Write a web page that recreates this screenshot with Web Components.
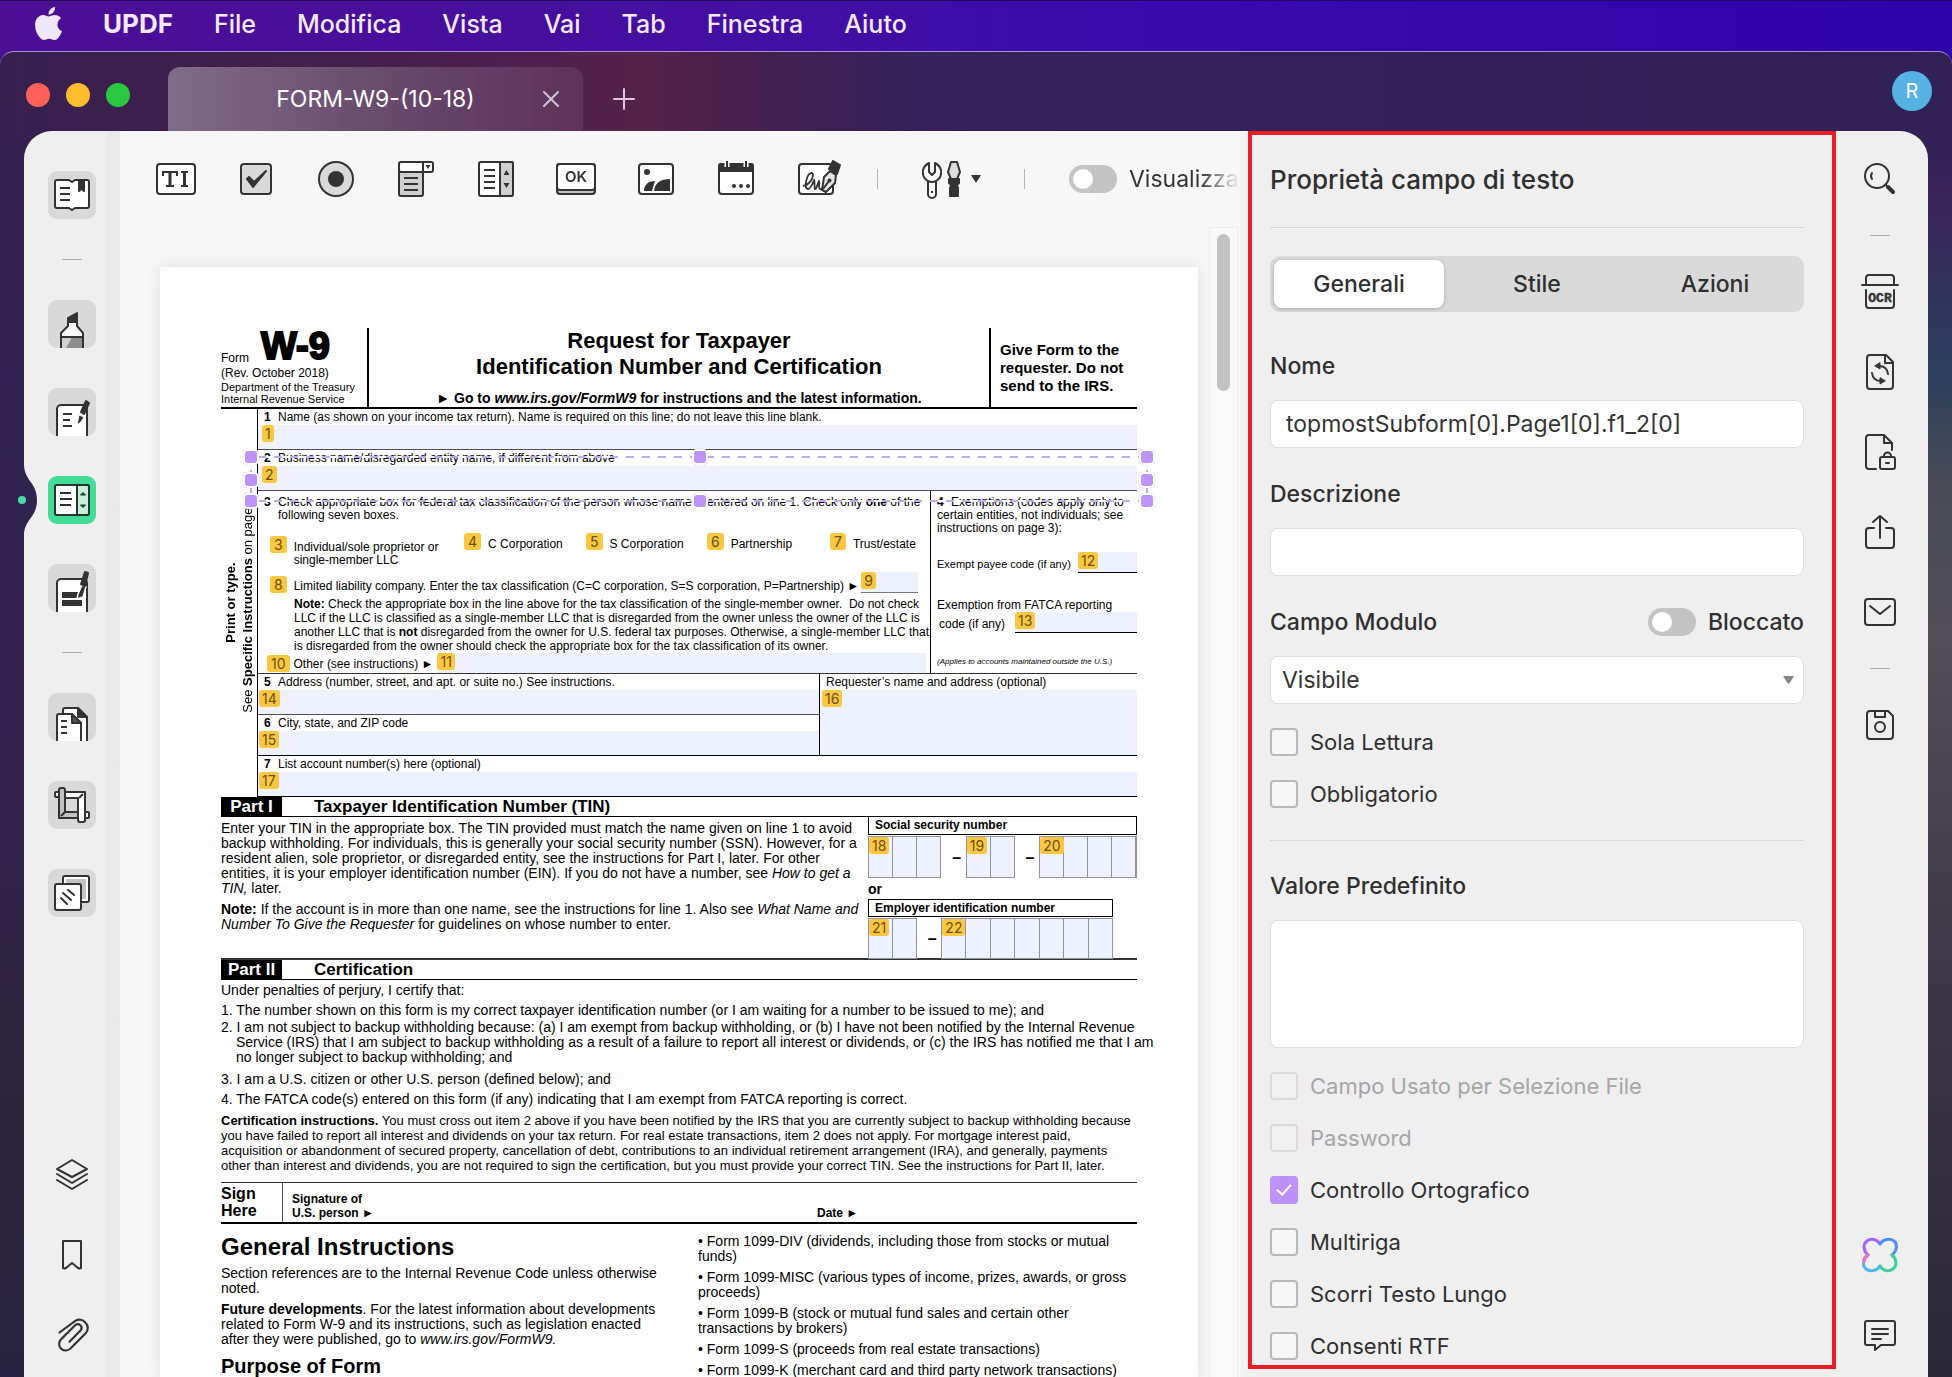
<!DOCTYPE html>
<html lang="it">
<head>
<meta charset="utf-8">
<title>UPDF</title>
<style>
html,body{height:100%}
body{margin:0;overflow:hidden;font-family:Inter,"Liberation Sans",sans-serif;color:#2f2f2f}
</style>
</head>
<body>
<updf-app></updf-app>
<script>
const BASE = `*{box-sizing:border-box}
button{font:inherit;color:inherit;background:none;border:0;padding:0;margin:0;display:block}
svg{display:block}p,h1,h2,h3{margin:0;font-weight:inherit;font-size:inherit}a{color:inherit;text-decoration:none}`;
function define(name, css, html){
  const t = document.createElement('template');
  t.innerHTML = `<style>${BASE}${css}</style>${html}`;
  customElements.define(name, class extends HTMLElement{
    constructor(){ super(); this.attachShadow({mode:'open'}).append(t.content.cloneNode(true)); }
  });
}

/* ---------- system menu bar ---------- */
define('mac-menubar', `
:host{display:flex;align-items:center;height:51px;padding:0 32px 5px;border-top:1px solid #210a5a;background:linear-gradient(90deg,#4b0f94,#430fa2 40%,#380aae 60%,#2f04a8);color:#f5e9ff;font-size:25px;font-weight:500}
nav{display:flex;align-items:center;gap:41px}
.apple{margin-right:-3px}
b{font-size:26px;font-weight:700}`, `
<nav aria-label="Menu">
<button class="apple" aria-label="Apple"><svg width="33" height="33" viewBox="0 0 24 24" fill="#f0e6fa"><path d="M12.152 6.896c-.948 0-2.415-1.078-3.96-1.04-2.04.027-3.91 1.183-4.961 3.014-2.117 3.675-.546 9.103 1.519 12.09 1.013 1.454 2.208 3.09 3.792 3.039 1.52-.065 2.09-.987 3.935-.987 1.831 0 2.35.987 3.96.948 1.637-.026 2.676-1.48 3.676-2.948 1.156-1.688 1.636-3.325 1.662-3.415-.039-.013-3.182-1.221-3.22-4.857-.026-3.04 2.48-4.494 2.597-4.559-1.429-2.09-3.623-2.324-4.39-2.376-2-.156-3.675 1.09-4.61 1.09zM15.53 3.83c.843-1.012 1.4-2.427 1.245-3.83-1.207.052-2.662.805-3.532 1.818-.78.896-1.454 2.338-1.273 3.714 1.338.104 2.715-.688 3.559-1.701"/></svg></button>
<button><b>UPDF</b></button><button>File</button><button>Modifica</button><button>Vista</button><button>Vai</button><button>Tab</button><button>Finestra</button><button>Aiuto</button>
</nav>`);

/* ---------- title bar ---------- */
define('app-titlebar', `
:host{display:flex;align-items:flex-end;height:79px;padding:0 20px 0 26px}
.lights{display:flex;gap:16px;margin:0 38px 24px 0}
.lights button{width:24px;height:24px;border-radius:50%;background:#ff6159}
.lights button:nth-child(2){background:#ffbd2e}.lights button:nth-child(3){background:#28c941}
.tab{display:grid;grid-template-columns:18px 1fr 18px;align-items:center;width:415px;height:64px;padding:0 23px;border-radius:12px 12px 0 0;background:linear-gradient(90deg,rgba(255,255,255,.34),rgba(255,255,255,.17) 60%,rgba(255,255,255,.08));color:#fff;font-size:23px;text-align:center}
.tab span{grid-column:2}
.plus{margin:0 auto 20px 29px}
.avatar{align-self:flex-start;margin-top:19px;width:40px;height:40px;border-radius:50%;background:#55b2e2;color:#fff;font-size:20px}`, `
<div class="lights"><button aria-label="Chiudi"></button><button aria-label="Riduci"></button><button aria-label="Ingrandisci"></button></div>
<div class="tab"><span>FORM-W9-(10-18)</span><button aria-label="Chiudi scheda"><svg width="18" height="18" viewBox="0 0 18 18" stroke="#cfc3d8" stroke-width="2" stroke-linecap="round"><path d="M2 2l14 14M16 2L2 16"/></svg></button></div>
<button class="plus" aria-label="Nuova scheda"><svg width="24" height="24" viewBox="0 0 24 24" stroke="#d6cbe0" stroke-width="2" stroke-linecap="round"><path d="M12 2v20M2 12h20"/></svg></button>
<button class="avatar" aria-label="Account">R</button>`);

/* ---------- left tool rail ---------- */
define('rail-tile', `
:host{display:block;position:relative;width:48px;height:48px}
button{width:48px;height:48px;border-radius:9px;background:#d9d9d9;overflow:hidden}
:host([active]) button{background:#43dc98}
.notch{display:none;position:absolute;left:-34px;top:-12px}
:host([active]) .notch{display:block}
::slotted(svg){display:block}`, `
<svg class="notch" width="26" height="72" viewBox="0 0 26 72"><path d="M0 0H10C10 17 23 18 23 36S10 55 10 72H0Z" fill="#2f2350"/><circle cx="8" cy="36" r="4" fill="#4fd8a0"/></svg>
<button><slot></slot></button>`);

define('tool-rail', `
:host{display:flex;flex-direction:column;align-items:center;gap:40px;padding:40px 0 22px;overflow:visible;border-radius:28px 0 0 0;background:linear-gradient(90deg,#efefef 84%,#eaeaea 88%,#e9e9e9)}
hr{width:20px;height:1px;margin:0;border:0;background:#a9a9a9}
.grow{margin-top:auto}`, `
<rail-tile><svg width="48" height="48" viewBox="0 0 48 48" fill="#fff" stroke="#333" stroke-width="2" stroke-linejoin="round"><path d="M9 9h12l3 2 3-2h12a2 2 0 0 1 2 2v24a2 2 0 0 1-2 2H27l-3 2-3-2H9a2 2 0 0 1-2-2V11a2 2 0 0 1 2-2z"/><path d="M12 17h10M12 23h10M12 29h10" fill="none"/><path d="M31 9h5v11l-2.500-2.500-2.500 2.500z" fill="#333"/></svg></rail-tile>
<hr>
<rail-tile><svg width="48" height="48" viewBox="0 0 48 48" fill="#fff" stroke="#333" stroke-width="2" stroke-linejoin="round"><path d="M13 50V33l7-7v-4h9v4l6 7v17z"/><path d="M14 37h10l-6 11h-4z" fill="#d0d0d0" stroke="none"/><path d="M24 37h10v11H18z" fill="#8e8e8e" stroke="none"/><path d="M13 37h22" fill="none"/><path d="M20 21v-3l9-5v8z" fill="#333"/></svg></rail-tile>
<rail-tile><svg width="48" height="48" viewBox="0 0 48 48" fill="#fff" stroke="#333" stroke-width="2" stroke-linejoin="round"><path d="M9 50V21a4 4 0 0 1 4-4h22a4 4 0 0 1 4 4v29z"/><path d="M15 26h9M15 32h7M15 38h9" fill="none"/><path d="M33 24l5-11 3 2-5 11z" fill="#333"/><path d="M31 27l5 2-3 5-4 3z" fill="#333" stroke="#fff" stroke-width="1"/></svg></rail-tile>
<rail-tile active><svg width="48" height="48" viewBox="0 0 48 48" fill="#fff" stroke="#26352e" stroke-width="2" stroke-linejoin="round"><rect x="7" y="9" width="34" height="30" rx="2"/><path d="M29 9h10a2 2 0 0 1 2 2v26a2 2 0 0 1-2 2H29z" fill="#c3f1da"/><path d="M12 17h11M12 23h12M12 29h11" fill="none"/><path d="M32.500 19l2.500-2.500 2.500 2.500zM32.500 29l2.500 2.500 2.500-2.500z" fill="#26352e" stroke-width="1"/></svg></rail-tile>
<rail-tile><svg width="48" height="48" viewBox="0 0 48 48" fill="#fff" stroke="#333" stroke-width="2" stroke-linejoin="round"><path d="M9 50V19a4 4 0 0 1 4-4h22a4 4 0 0 1 4 4v31z"/><path d="M14 28h20v6H14zM14 36h20v6H14z" fill="#333" stroke="none"/><path d="M30 30l4-9 4 2-3 10-6 2z" fill="#333" stroke="#fff" stroke-width="1.500"/><path d="M33 20l4-12 3 1-3 13z" fill="#333"/></svg></rail-tile>
<hr>
<rail-tile><svg width="48" height="48" viewBox="0 0 48 48" fill="#fff" stroke="#333" stroke-width="2" stroke-linejoin="round"><path d="M15 50V17a2 2 0 0 1 2-2h13l9 9v26z"/><path d="M30 15v9h9z" fill="#333"/><path d="M9 50V23a2 2 0 0 1 2-2h13l9 9v20z"/><path d="M24 21v9h9z" fill="#555"/><path d="M13 28h6M13 34h6M13 40h6" fill="none"/></svg></rail-tile>
<rail-tile><svg width="48" height="48" viewBox="0 0 48 48" fill="#fff" stroke="#333" stroke-width="2" stroke-linejoin="round"><rect x="7" y="11" width="8" height="5" rx="1"/><rect x="35" y="31" width="6" height="6" rx="1"/><path d="M17 11h20v28a2 2 0 0 1-2 2h-3a2 2 0 0 1-2-2V17H17z"/><path d="M11 9a2 2 0 0 1 2-2h2a2 2 0 0 1 2 2v22h13v6H11z" fill="#c2c2c2"/><path d="M17 31l-4 4M31 17l4-4"/></svg></rail-tile>
<rail-tile><svg width="48" height="48" viewBox="0 0 48 48" fill="#fff" stroke="#333" stroke-width="2" stroke-linejoin="round"><rect x="15" y="7" width="26" height="26" rx="2"/><path d="M18 10h20v20H18z" fill="#c4c4c4" stroke="none"/><rect x="7" y="15" width="26" height="26" rx="2"/><path d="M15 24l8 7M20 21l6 5M13 29l6 6" fill="none" stroke-linecap="round"/></svg></rail-tile>
<button class="grow" aria-label="Livelli"><svg width="40" height="40" viewBox="0 0 40 40" fill="none" stroke="#333" stroke-width="2" stroke-linejoin="round" stroke-linecap="round"><path d="M20 5l15 9-15 8-15-8zM5 19l15 9 15-9M5 25l15 9 15-9"/></svg></button>
<button aria-label="Segnalibro"><svg width="40" height="40" viewBox="0 0 40 40" fill="none" stroke="#333" stroke-width="2" stroke-linejoin="round"><path d="M11 6h18v27q-1 1-3 0l-6-5-6 5q-2 1-3 0z"/></svg></button>
<button aria-label="Allegati"><svg width="40" height="40" viewBox="0 0 24 24" fill="none" stroke="#333" stroke-width="1.300" stroke-linecap="round"><path d="M4.500 10.500l9.500-7a4.600 4.600 0 0 1 6 1 4.600 4.600 0 0 1 .2 6.500l-8.500 8.500a4.200 4.200 0 0 1-6.500.5 4.200 4.200 0 0 1 .8-6l8-8c2-1.500 5 .8 3.200 3.200L10.500 16" /></svg></button>`);

/* ---------- switch + checkbox ---------- */
define('ui-switch', `
:host{display:block}
label{display:flex;align-items:center;gap:12px;line-height:28px;white-space:nowrap}
input{appearance:none;flex:none;width:48px;height:28px;margin:0;padding:4px;border-radius:14px;background:#c4c4c4}
input::before{content:"";display:block;width:20px;height:20px;border-radius:50%;background:#fff}`, `
<label><input type="checkbox" role="switch"><slot></slot></label>`);

class UiCheck extends HTMLElement{
  constructor(){ super(); this.attachShadow({mode:'open'}).innerHTML = `<style>${BASE}
:host{display:block;font-size:22px;line-height:28px}
:host([disabled]){color:#a6a6a6}
label{display:flex;gap:12px}
input{appearance:none;flex:none;width:28px;height:28px;margin:0;border:2px solid #b9b9b9;border-radius:4px;background:#f6f6f6;display:grid;place-items:center}
input:disabled{border-color:#dadada;background:#f0f0f0}
input:checked{border-color:#be91fa;background:#be91fa}
input:checked::before{content:"";width:6px;height:12px;border:solid #fff;border-width:0 2px 2px 0;transform:rotate(42deg);margin-top:-4px}
</style><label><input type="checkbox"><slot></slot></label>`;
    const i = this.shadowRoot.querySelector('input');
    i.checked = this.hasAttribute('checked'); i.disabled = this.hasAttribute('disabled'); }
}
customElements.define('ui-check', UiCheck);

/* ---------- form toolbar ---------- */
define('form-toolbar', `
:host{display:flex;align-items:center;gap:40px;height:96px;padding:0 4px 0 36px;overflow:hidden;-webkit-mask-image:linear-gradient(90deg,#000 calc(100% - 40px),transparent 100%);mask-image:linear-gradient(90deg,#000 calc(100% - 40px),transparent 100%);color:#333;font-size:23px}
svg,button{flex:none}
i{flex:none;width:1px;height:20px;background:#b5b5b5}
ui-switch{margin-left:4px}`, `
<button aria-label="Campo di testo"><svg width="40" height="40" viewBox="0 0 40 40" fill="#fff" stroke="#333" stroke-width="2"><rect x="1" y="5" width="38" height="30" rx="3"/><path d="M7 17v-4h14v4M10 27h8M25 13h7M25 27h7" fill="none"/><path d="M14 12v15M28.500 12v15" stroke-width="3"/></svg></button>
<button aria-label="Casella di controllo"><svg width="40" height="40" viewBox="0 0 40 40" fill="#d9d9d9" stroke="#333" stroke-width="2"><rect x="5" y="5" width="30" height="30" rx="3"/><path d="M11 20l6 8L30 12 18 23l-5-5z" fill="#333" stroke-linejoin="round"/></svg></button>
<button aria-label="Pulsante di opzione"><svg width="40" height="40" viewBox="0 0 40 40" fill="#d9d9d9" stroke="#333" stroke-width="2"><circle cx="20" cy="20" r="17"/><circle cx="20" cy="20" r="8" fill="#333" stroke="none"/></svg></button>
<button aria-label="Menu a discesa"><svg width="40" height="40" viewBox="0 0 40 40" fill="#fff" stroke="#333" stroke-width="2"><path d="M3 13h24v22a2 2 0 0 1-2 2H5a2 2 0 0 1-2-2z" fill="#cfcfcf"/><rect x="3" y="3" width="34" height="10" rx="2"/><path d="M27 3v10M8 19h14M8 25h14M8 31h14" fill="none"/><path d="M29.500 6h5L32 10z" fill="#333" stroke="none"/></svg></button>
<button aria-label="Elenco"><svg width="40" height="40" viewBox="0 0 40 40" fill="#fff" stroke="#333" stroke-width="2"><rect x="3" y="3" width="34" height="34" rx="2"/><path d="M24 3h11a2 2 0 0 1 2 2v30a2 2 0 0 1-2 2H24z" fill="#cfcfcf"/><path d="M8 11h11M8 17h11M8 23h11M8 29h11" fill="none"/><path d="M27.500 16l3-5 3 5zM27.500 24l3 5 3-5z" fill="#333" stroke="none"/></svg></button>
<button aria-label="Pulsante"><svg width="40" height="40" viewBox="0 0 40 40" stroke="#333" stroke-width="2"><rect x="1" y="5" width="38" height="30" rx="3" fill="#c4c4c4"/><path d="M4 5h32a3 3 0 0 1 3 3v20a3 3 0 0 1-3 3H4a3 3 0 0 1-3-3V8a3 3 0 0 1 3-3z" fill="#fff"/><text x="20" y="23" text-anchor="middle" font-family="Inter" font-size="15" font-weight="600" fill="#333" stroke="none">OK</text></svg></button>
<button aria-label="Immagine"><svg width="40" height="40" viewBox="0 0 40 40" fill="#fff" stroke="#333" stroke-width="2"><rect x="3" y="5" width="34" height="30" rx="3"/><g fill="#333" stroke="none"><circle cx="11" cy="13" r="3"/><path d="M8 32c0-6 4-10 11-10v0l-3 10zM18 32c1-8 6-12 16-12v12z"/></g></svg></button>
<button aria-label="Data"><svg width="40" height="40" viewBox="0 0 40 40" fill="#fff" stroke="#333" stroke-width="2"><rect x="3" y="5" width="34" height="30" rx="3"/><path d="M5 5h30a2 2 0 0 1 2 2v5H3V7a2 2 0 0 1 2-2z" fill="#333"/><path d="M11 3v5M30 3v5" stroke="#fff" stroke-width="5"/><path d="M11 2v7M30 2v7"/><g fill="#333" stroke="none"><circle cx="18" cy="27" r="2"/><circle cx="25" cy="27" r="2"/><circle cx="32" cy="27" r="2"/></g></svg></button>
<button aria-label="Firma"><svg width="45" height="40" viewBox="0 0 45 40" fill="#fff" stroke="#333" stroke-width="2" stroke-linejoin="round"><rect x="3" y="5" width="34" height="30" rx="3"/><path d="M7 27c6-1 10-7 10-11 0-3-4-3-6 3s-2 11 1 11 5-6 6-9c1 0 0 8 1 9s3-6 4-8c1 0-1 7 1 8s3-1 4-2" fill="none" stroke-width="1.800"/><path d="M26 31l2-13 6-6 6 4-1 8-9 9z" fill="#e5e5e5"/><path d="M27 30l6-8"/><circle cx="33.500" cy="21.500" r="1"/><path d="M33 10l4-8 7 4-3 9z" fill="#333"/></svg></button>
<i style="margin-left:-4px"></i>
<button aria-label="Strumenti"><svg width="66" height="40" viewBox="0 0 66 40" fill="#fff" stroke="#333" stroke-width="2" stroke-linejoin="round"><path d="M11 4c-8 4-8 14-1 18v13a4 4 0 0 0 8 0V22c7-4 7-14-1-18v9l-3 3-3-3z"/><path d="M10 22q4 2 8 0"/><path d="M33 3h6l3 10-3 7h-6l-3-7z" fill="#ddd"/><path d="M31 20h10v4l-2 2 1 3v8h-8v-8l1-3-2-2z" fill="#333"/><path d="M14 32v2" /><path d="M53 16h10l-5 8z" fill="#333" stroke="none"/></svg></button>
<i></i>
<ui-switch>Visualizza</ui-switch>`);

/* ---------- PDF form field with its tab-order badge ---------- */
class PdfField extends HTMLElement{
  constructor(){ super(); const n = this.getAttribute('n'), cells = +this.getAttribute('cells') || 0, box = this.hasAttribute('box');
    this.attachShadow({mode:'open'}).innerHTML = `<style>${BASE}
:host{display:block;position:relative;background:#eef2fe;min-width:0;font-family:Inter,sans-serif}
:host([box]){flex:none;background:none}
:host([cells]){background:repeating-linear-gradient(90deg,transparent 0 calc(100%/${cells||1} - 1px),#8f94a1 calc(100%/${cells||1} - 1px) calc(100%/${cells||1})) #eef2fe;border:1px solid #8f94a1;border-right:0}
input{appearance:none;position:absolute;inset:0;width:100%;height:100%;margin:0;border:0;padding:0 4px;background:none}
span{position:absolute;left:var(--bx,0);top:0;z-index:1;padding:0 3px;border-radius:3px;background:#fbc740;color:#6a5118;font-size:14px;line-height:17px}
:host([box]) span{position:static;display:block;padding:0 4px}
</style><input type="${box?'checkbox':'text'}" aria-label="Campo ${n}"><span>${n}</span>`; }
}
customElements.define('pdf-field', PdfField);

/* ---------- W-9 sheet ---------- */
define('w9-header', `
:host{display:grid;grid-template-columns:148px 1fr 148px;height:81px;border-bottom:2px solid #000}
.l{border-right:2px solid #000;font-size:11px;line-height:12px}
.f{display:flex;align-items:flex-end;gap:12px;height:37px;font-size:12px}
.f span{padding-bottom:1px}
.f b{font-size:38px;line-height:38px;-webkit-text-stroke:2px #000}
.rev{font-size:12px;line-height:16px}
.c{text-align:center;font-weight:700}
h1{font-size:22px;line-height:26px}
.c p{margin-top:10px;font-size:14px;line-height:16px}
.r{display:flex;align-items:center;padding-left:9px;border-left:2px solid #000;font-size:15px;line-height:18px;font-weight:700;white-space:nowrap}`, `
<div class="l"><div class="f"><span>Form</span><b>W-9</b></div><p class="rev">(Rev. October 2018)</p><p>Department of the Treasury</p><p>Internal Revenue Service</p></div>
<div class="c"><h1>Request for Taxpayer<br>Identification Number and Certification</h1><p>► Go to <em>www.irs.gov/FormW9</em> for instructions and the latest information.</p></div>
<div class="r">Give Form to the<br>requester. Do not<br>send to the IRS.</div>`);

define('selection-box', `
:host{position:absolute;z-index:2;inset:6px -11px -12px -8px;
--h:repeating-linear-gradient(90deg,#fff 0 8px,#c0a9ee 8px 16px);--v:repeating-linear-gradient(0deg,#fff 0 8px,#c0a9ee 8px 16px);
background:var(--h) top/100% 2px no-repeat,var(--h) bottom/100% 2px no-repeat,var(--v) left/2px 100% no-repeat,var(--v) right/2px 100% no-repeat}
i{position:absolute;width:16px;height:16px;margin:-7px;border:2px solid #fff;border-radius:5px;background:#be93fa;box-shadow:0 0 1px #b9a3d6}
.t{top:0}.m{top:50%}.b{top:calc(100% - 2px)}.w{left:0}.c{left:50%}.e{left:calc(100% - 2px)}`, `
<i class="t w"></i><i class="t c"></i><i class="t e"></i><i class="m w"></i><i class="m e"></i><i class="b w"></i><i class="b c"></i><i class="b e"></i>`);

define('w9-fields', `
:host{display:grid;grid-template-columns:37px 1fr;font-size:12px;line-height:13px;white-space:nowrap}
.side{display:flex;align-items:center;justify-content:center;border-right:1px solid #000}
.side p{writing-mode:vertical-rl;transform:rotate(180deg);text-align:center;font-size:13px;line-height:17px}
.row{position:relative;display:flex;flex-direction:column;height:41px;border-bottom:1px solid #4d4d55}
.lab{display:flex;flex:none;height:16px;padding-left:6px;line-height:16px}
.lab b,.q b.n{display:inline-block;width:14px}
pdf-field{--bx:4px}
.row>pdf-field{flex:1}
.tight{--bx:1px}
.three{display:grid;grid-template-columns:1fr 207px;height:183px;border-bottom:1px solid #333}
.q{padding:5px 0 0 6px}
.q.ind{padding-left:20px}
.q .n{margin-left:-14px}
.boxes{display:grid;grid-template-columns:194fr 122fr 121fr 123fr 100fr;height:34px;margin:11px 0 5px;padding-left:12px}
.boxes div,.llc{display:flex;align-items:flex-start;gap:7px}
.boxes p{padding-top:5px}
.boxes div:first-child{padding-top:3px}
.llc{height:21px;padding-left:12px;align-items:flex-end}
.llc .in{width:57px;height:21px;margin-left:-5px;border-bottom:1px solid #777;--bx:0px}
.note{margin:4px 0 0;padding-left:36px;line-height:14px}
.other{display:flex;height:20px;padding:0 4px 0 9px;gap:4px;line-height:22px}
.other .in{flex:1;--bx:0px}
.other pdf-field[box]{padding-top:2px}
.ex{border-left:1px solid #000;padding-left:6px}
.ex .q{padding:5px 0 0}.ex .q .n{margin:0}
.code{display:flex;justify-content:space-between;height:21px;line-height:24px}
.code pdf-field{height:21px;border-bottom:1px solid #000;--bx:0px}
.payee{margin:17px 0 26px;font-size:11px}
.payee pdf-field{width:59px}
.fatca{padding-left:2px}
.fatca pdf-field{width:122px}
.applies{margin-top:23px;font-size:8px;line-height:12px;font-style:italic}
.addr{display:grid;grid-template-columns:1fr 318px}
.req{display:flex;flex-direction:column;border-left:1px solid #000;border-bottom:1px solid #000}
.req pdf-field{flex:1;--bx:2px}
.dark{border-color:#000}`, `
<div class="side"><p><b>Print or type.</b><br>See <b>Specific Instructions</b> on page 3.</p></div>
<div>
<div class="row"><div class="lab"><b>1</b>Name (as shown on your income tax return). Name is required on this line; do not leave this line blank.</div><pdf-field n="1"></pdf-field></div>
<div class="row"><div class="lab"><b>2</b>Business name/disregarded entity name, if different from above</div><pdf-field n="2"></pdf-field><selection-box></selection-box></div>
<div class="three">
 <div>
  <p class="q ind"><b class="n">3</b>Check appropriate box for federal tax classification of the person whose name is entered on line 1. Check only <b>one</b> of the<br>following seven boxes.</p>
  <div class="boxes">
   <div><pdf-field box n="3"></pdf-field><p>Individual/sole proprietor or<br>single-member LLC</p></div>
   <div><pdf-field box n="4"></pdf-field><p>C Corporation</p></div>
   <div><pdf-field box n="5"></pdf-field><p>S Corporation</p></div>
   <div><pdf-field box n="6"></pdf-field><p>Partnership</p></div>
   <div><pdf-field box n="7"></pdf-field><p>Trust/estate</p></div>
  </div>
  <div class="llc"><pdf-field box n="8"></pdf-field><p>Limited liability company. Enter the tax classification (C=C corporation, S=S corporation, P=Partnership) ►</p><pdf-field class="in" n="9"></pdf-field></div>
  <p class="note"><b>Note:</b> Check the appropriate box in the line above for the tax classification of the single-member owner.&nbsp; Do not check<br>LLC if the LLC is classified as a single-member LLC that is disregarded from the owner unless the owner of the LLC is<br>another LLC that is <b>not</b> disregarded from the owner for U.S. federal tax purposes. Otherwise, a single-member LLC that<br>is disregarded from the owner should check the appropriate box for the tax classification of its owner.</p>
  <div class="other"><pdf-field box n="10"></pdf-field><span>Other (see instructions) ►</span><pdf-field class="in" n="11"></pdf-field></div>
 </div>
 <div class="ex">
  <p class="q"><b class="n">4</b>Exemptions (codes apply only to<br>certain entities, not individuals; see<br>instructions on page 3):</p>
  <div class="code payee"><span>Exempt payee code (if any)</span><pdf-field n="12"></pdf-field></div>
  <p>Exemption from FATCA reporting</p>
  <div class="code fatca"><span>code (if any)</span><pdf-field n="13"></pdf-field></div>
  <p class="applies">(Applies to accounts maintained outside the U.S.)</p>
 </div>
</div>
<div class="addr">
 <div>
  <div class="row"><div class="lab"><b>5</b>Address (number, street, and apt. or suite no.) See instructions.</div><pdf-field class="tight" n="14"></pdf-field></div>
  <div class="row dark"><div class="lab"><b>6</b>City, state, and ZIP code</div><pdf-field class="tight" n="15"></pdf-field></div>
 </div>
 <div class="req"><div class="lab">Requester’s name and address (optional)</div><pdf-field n="16"></pdf-field></div>
</div>
<div class="row dark"><div class="lab"><b>7</b>List account number(s) here (optional)</div><pdf-field class="tight" n="17"></pdf-field></div>
</div>`);

define('w9-part', `
:host{display:flex;gap:32px;height:20px;border-bottom:1px solid #000;font-size:17px;line-height:20px;font-weight:700}
:host([ruled]){height:22px;border-top:2px solid #333}
span{width:61px;background:#000;color:#fff;text-align:center}`, `
<span><slot name="no"></slot></span><h2><slot></slot></h2>`);

define('w9-tin', `
:host{display:grid;grid-template-columns:1fr 269px;height:141px;font-size:14px;line-height:15px;white-space:nowrap}
.txt{padding-top:4px}
.txt p+p{margin-top:6px}
.nums{display:grid;grid-template-columns:repeat(11,1fr);grid-template-rows:19px 42px 19px 18px 41px;margin-top:-1px;row-gap:1px}
h3{grid-column:1/-1;padding-left:6px;border:1px solid #000;font-size:12px;line-height:16px;font-weight:700}
h3.e{grid-column:1/11}
.or{grid-column:1/-1;font-size:14px;line-height:20px;font-weight:700}
.d{display:grid;place-items:center;padding-left:6px;font-size:16px;font-weight:700}
.s2{grid-column:span 2}.s3{grid-column:span 3}.s4{grid-column:span 4}.s7{grid-column:span 7}
.s4,.last{border-right:1px solid #8f94a1}`, `
<div class="txt"><p>Enter your TIN in the appropriate box. The TIN provided must match the name given on line 1 to avoid<br>backup withholding. For individuals, this is generally your social security number (SSN). However, for a<br>resident alien, sole proprietor, or disregarded entity, see the instructions for Part I, later. For other<br>entities, it is your employer identification number (EIN). If you do not have a number, see <em>How to get a</em><br><em>TIN,</em> later.</p>
<p><b>Note:</b> If the account is in more than one name, see the instructions for line 1. Also see <em>What Name and</em><br><em>Number To Give the Requester</em> for guidelines on whose number to enter.</p></div>
<div class="nums"><h3>Social security number</h3>
<pdf-field class="s3" cells="3" n="18"></pdf-field><span class="d">–</span><pdf-field class="s2" cells="2" n="19"></pdf-field><span class="d">–</span><pdf-field class="s4" cells="4" n="20"></pdf-field>
<p class="or">or</p><h3 class="e">Employer identification number</h3>
<pdf-field class="s2" cells="2" n="21"></pdf-field><span class="d">–</span><pdf-field class="s7" cells="7" n="22"></pdf-field></div>`);

define('w9-certification', `
:host{display:block;font-size:14px;line-height:15px;white-space:nowrap}
.p{margin:3px 0 5px}
ol{margin:0;padding:0;list-style:none}
li{padding-left:15px;text-indent:-15px;margin-bottom:5px}
li:first-child{margin-bottom:2px}
li:nth-child(2){margin-bottom:7px}
li span{display:block;text-indent:0}
.ci{font-size:13px;margin-top:6px}
.sign{display:grid;grid-template-columns:62px 525px 1fr;height:42px;margin-top:9px;border-top:1px solid #333;border-bottom:2px solid #000;font-size:12px;line-height:14px;font-weight:700}
.sign h3{padding-top:2px;border-right:1px solid #555;font-size:16px;line-height:17px;font-weight:700}
.sign p{align-self:end;padding:0 0 2px 9px}`, `
<p class="p">Under penalties of perjury, I certify that:</p>
<ol><li>1. The number shown on this form is my correct taxpayer identification number (or I am waiting for a number to be issued to me); and</li>
<li>2. I am not subject to backup withholding because: (a) I am exempt from backup withholding, or (b) I have not been notified by the Internal Revenue<span>Service (IRS) that I am subject to backup withholding as a result of a failure to report all interest or dividends, or (c) the IRS has notified me that I am<br>no longer subject to backup withholding; and</span></li>
<li>3. I am a U.S. citizen or other U.S. person (defined below); and</li>
<li>4. The FATCA code(s) entered on this form (if any) indicating that I am exempt from FATCA reporting is correct.</li></ol>
<p class="ci"><b>Certification instructions.</b> You must cross out item 2 above if you have been notified by the IRS that you are currently subject to backup withholding because<br>you have failed to report all interest and dividends on your tax return. For real estate transactions, item 2 does not apply. For mortgage interest paid,<br>acquisition or abandonment of secured property, cancellation of debt, contributions to an individual retirement arrangement (IRA), and generally, payments<br>other than interest and dividends, you are not required to sign the certification, but you must provide your correct TIN. See the instructions for Part II, later.</p>
<div class="sign"><h3>Sign<br>Here</h3><p>Signature of<br>U.S. person ►</p><p>Date ►</p></div>`);

define('w9-instructions', `
:host{display:grid;grid-template-columns:477fr 439fr;font-size:14px;line-height:15px;white-space:nowrap}
h2{margin:9px 0 5px;font-size:24px;line-height:28px;font-weight:700}
h3{margin-top:8px;font-size:20px;line-height:22px;font-weight:700}
p+p{margin-top:6px}
.r{padding-top:10px}`, `
<div><h2>General Instructions</h2><p>Section references are to the Internal Revenue Code unless otherwise<br>noted.</p><p><b>Future developments</b>. For the latest information about developments<br>related to Form W-9 and its instructions, such as legislation enacted<br>after they were published, go to <em>www.irs.gov/FormW9.</em></p><h3>Purpose of Form</h3></div>
<div class="r"><p>• Form 1099-DIV (dividends, including those from stocks or mutual<br>funds)</p><p>• Form 1099-MISC (various types of income, prizes, awards, or gross<br>proceeds)</p><p>• Form 1099-B (stock or mutual fund sales and certain other<br>transactions by brokers)</p><p>• Form 1099-S (proceeds from real estate transactions)</p><p>• Form 1099-K (merchant card and third party network transactions)</p></div>`);

define('w9-sheet', `
:host{display:block;padding:61px 61px 0;background:#fff;box-shadow:0 0 14px rgba(0,0,0,.1);font-family:"Liberation Sans",sans-serif;color:#000}`, `
<w9-header></w9-header><w9-fields></w9-fields>
<w9-part><span slot="no">Part I</span>Taxpayer Identification Number (TIN)</w9-part><w9-tin></w9-tin>
<w9-part ruled><span slot="no">Part II</span>Certification</w9-part><w9-certification></w9-certification>
<w9-instructions></w9-instructions>`);

define('doc-canvas', `
:host{display:flex;flex-direction:column;min-width:0;min-height:0;background:#f7f7f7}
.view{display:flex;flex:1;min-height:0}
.page{flex:1;min-width:0;padding:40px 11px 0 40px;overflow:hidden}
.track{width:29px;margin-right:2px;padding:6px 7px;border:1px solid #ececec;border-bottom:0;background:#f9f9f9}
.thumb{height:157px;border-radius:8px;background:#c2c2c2}`, `
<form-toolbar></form-toolbar>
<div class="view"><div class="page"><w9-sheet></w9-sheet></div><div class="track"><div class="thumb"></div></div></div>`);

/* ---------- properties panel ---------- */
define('segmented-tabs', `
:host{display:grid;grid-template-columns:repeat(3,1fr);gap:8px;padding:4px;border-radius:10px;background:#dadada;font-size:23px;font-weight:500}
button{height:48px;border-radius:8px}
button[aria-selected=true]{background:#fff;box-shadow:0 1px 4px rgba(0,0,0,.22)}`, `
<button role="tab" aria-selected="true">Generali</button><button role="tab">Stile</button><button role="tab">Azioni</button>`);

define('props-panel', `
:host{display:block;position:relative;padding:0 28px 0 30px;background:linear-gradient(90deg,#f5f5f5,#efefef 12px);font-size:23px;line-height:28px}
.frame{position:absolute;inset:0 -4px 8px 8px;border:4px solid #ec1d27;pointer-events:none}
h1{display:flex;align-items:center;height:97px;padding-top:2px;border-bottom:1px solid #d6d6d6;font-size:26px;font-weight:500}
segmented-tabs{margin:28px 0 40px}
.lab{display:flex;justify-content:space-between;margin:32px 0 20px;font-weight:500}
.first{margin-top:0}
input,textarea,select{display:block;width:100%;height:48px;margin:0;padding:0 15px;border:1px solid #dcdcdc;border-radius:8px;background:#fff;color:#333;font:inherit;outline:0;resize:none;appearance:none}
select{padding:0 11px;grid-area:1/1}
.sel{display:grid;align-items:center}
.sel svg{grid-area:1/1;justify-self:end;margin-right:10px}
textarea{height:128px}
ui-check{margin-top:24px}
hr{height:1px;margin:32px 0 31px;border:0;background:#d6d6d6}
.lab.v{margin-top:0}`, `
<h1>Proprietà campo di testo</h1>
<segmented-tabs role="tablist"></segmented-tabs>
<label class="lab first" for="n">Nome</label><input id="n" value="topmostSubform[0].Page1[0].f1_2[0]">
<label class="lab" for="d">Descrizione</label><input id="d">
<div class="lab"><label for="m">Campo Modulo</label><ui-switch>Bloccato</ui-switch></div>
<div class="sel"><select id="m"><option>Visibile</option></select><svg width="11" height="8" viewBox="0 0 11 8"><path d="M1 0h9q1 0 .500 1L6.500 7q-1 1-2 0L.500 1Q0 0 1 0z" fill="#868686"/></svg></div>
<ui-check>Sola Lettura</ui-check><ui-check>Obbligatorio</ui-check>
<hr>
<label class="lab v" for="v">Valore Predefinito</label><textarea id="v"></textarea>
<ui-check disabled>Campo Usato per Selezione File</ui-check><ui-check disabled>Password</ui-check><ui-check checked>Controllo Ortografico</ui-check><ui-check>Multiriga</ui-check><ui-check>Scorri Testo Lungo</ui-check><ui-check>Consenti RTF</ui-check>
<div class="frame"></div>`);

/* ---------- right action rail ---------- */
define('action-rail', `
:host{display:flex;flex-direction:column;align-items:center;gap:40px;padding:28px 0 22px;border-radius:0 28px 0 0;background:#efefef}
hr{width:20px;height:1px;margin:-4px 0;border:0;background:#a9a9a9}
svg{fill:none;stroke:#333;stroke-width:2;stroke-linejoin:round;stroke-linecap:round}
.grow{margin-top:auto}`, `
<button aria-label="Cerca"><svg width="40" height="40" viewBox="0 0 40 40"><circle cx="17" cy="17" r="12"/><path d="M12 14q-2 3 0 6M26 26l2 2"/><path d="M28 28l5 5" stroke-width="4"/></svg></button>
<hr>
<button aria-label="OCR"><svg width="40" height="40" viewBox="0 0 40 40"><path d="M6 13V6a3 3 0 0 1 3-3h22a3 3 0 0 1 3 3v7M2 13h36M6 18v15a3 3 0 0 0 3 3h22a3 3 0 0 0 3-3V18"/><text x="20" y="30" text-anchor="middle" font-family="Liberation Mono" font-size="13" font-weight="700" fill="#333" stroke="#333" stroke-width=".5">OCR</text></svg></button>
<button aria-label="Converti"><svg width="40" height="40" viewBox="0 0 40 40"><path d="M26 3H10a3 3 0 0 0-3 3v28a3 3 0 0 0 3 3h20a3 3 0 0 0 3-3V10zM25 3v8h8M19 14q8 0 9 8M21 29q-8 0-9-8"/><path d="M20 11v6l-5-3zM20 26v6l5-3z" fill="#333" stroke-width="1"/></svg></button>
<button aria-label="Proteggi"><svg width="40" height="40" viewBox="0 0 40 40"><path d="M16 37H9a3 3 0 0 1-3-3V6a3 3 0 0 1 3-3h15l8 8v7M24 3v8h8"/><rect x="20" y="25" width="15" height="12" rx="2"/><path d="M24 25v-1a3.500 3.500 0 0 1 7 0v1M26 31h3"/></svg></button>
<button aria-label="Condividi"><svg width="40" height="40" viewBox="0 0 40 40"><path d="M14 16H9a3 3 0 0 0-3 3v14a3 3 0 0 0 3 3h22a3 3 0 0 0 3-3V19a3 3 0 0 0-3-3h-5M20 26V4M13 10l7-6 7 6"/></svg></button>
<button aria-label="E-mail"><svg width="40" height="40" viewBox="0 0 40 40"><rect x="5" y="7" width="30" height="26" rx="3"/><path d="M10 14l10 8 10-8"/></svg></button>
<hr>
<button aria-label="Salva"><svg width="40" height="40" viewBox="0 0 40 40"><path d="M10 6h18l5 5v20a3 3 0 0 1-3 3H10a3 3 0 0 1-3-3V9a3 3 0 0 1 3-3zM15 6v6h10V6"/><circle cx="20" cy="22" r="5"/></svg></button>
<button class="grow" aria-label="Assistente AI"><svg width="40" height="40" viewBox="0 0 40 40" style="stroke-width:3"><path d="M8 20C3 16 3 9 7 6S17 4 20 9" stroke="#a566f5"/><path d="M20 9C23 4 30 3 34 6S37 16 32 20" stroke="#4f8df8"/><path d="M32 20C37 24 37 31 33 34S23 36 20 31" stroke="#3ccf9b"/><path d="M20 31C17 36 10 37 6 34S3 24 8 20" stroke="#4cb4f0"/><path d="M4 27C3 24 5 22 8 20" stroke="#ee72b8"/></svg></button>
<button aria-label="Commenti"><svg width="40" height="40" viewBox="0 0 40 40"><path d="M7 6h26a2 2 0 0 1 2 2v20a2 2 0 0 1-2 2H21l-6 5v-5H7a2 2 0 0 1-2-2V8a2 2 0 0 1 2-2zM12 14h16M12 19h16M12 24h9"/></svg></button>`);

/* ---------- window ---------- */
define('updf-app', `
:host{display:flex;flex-direction:column;height:100vh;overflow:hidden;background:linear-gradient(90deg,#43128f,#430fa2 40%,#2f04a8)}
mac-menubar{flex:none}
.win{display:flex;flex-direction:column;flex:1;min-height:0;border-top:1px solid #a78fd6;border-radius:14px 14px 0 0;overflow:hidden;background:
 linear-gradient(90deg,#37204f,#432049 18%,#4c204f 26%,#53224a 33%,#42204f 40%,#34225a 47%,#302157) top/100% 90px no-repeat,
 linear-gradient(#302157 0 8%,#3a2357 10%,#2b3f5c 24%,#4a4b56 33%,#524f56 44%,#3b3747 70%,#2a2736) right/50% 100% no-repeat,
 linear-gradient(#37204f,#2f2350 30%,#35214e 50%,#2f2348 62%,#2a2438 80%,#262140)}
.body{display:grid;grid-template-columns:96px minmax(0,1fr) 592px 96px;flex:1;min-height:0;padding:0 24px}
.body>*{min-height:0}`, `
<mac-menubar></mac-menubar>
<div class="win"><app-titlebar></app-titlebar>
<div class="body"><tool-rail></tool-rail><doc-canvas></doc-canvas><props-panel></props-panel><action-rail></action-rail></div></div>`);
</script>
</body>
</html>
